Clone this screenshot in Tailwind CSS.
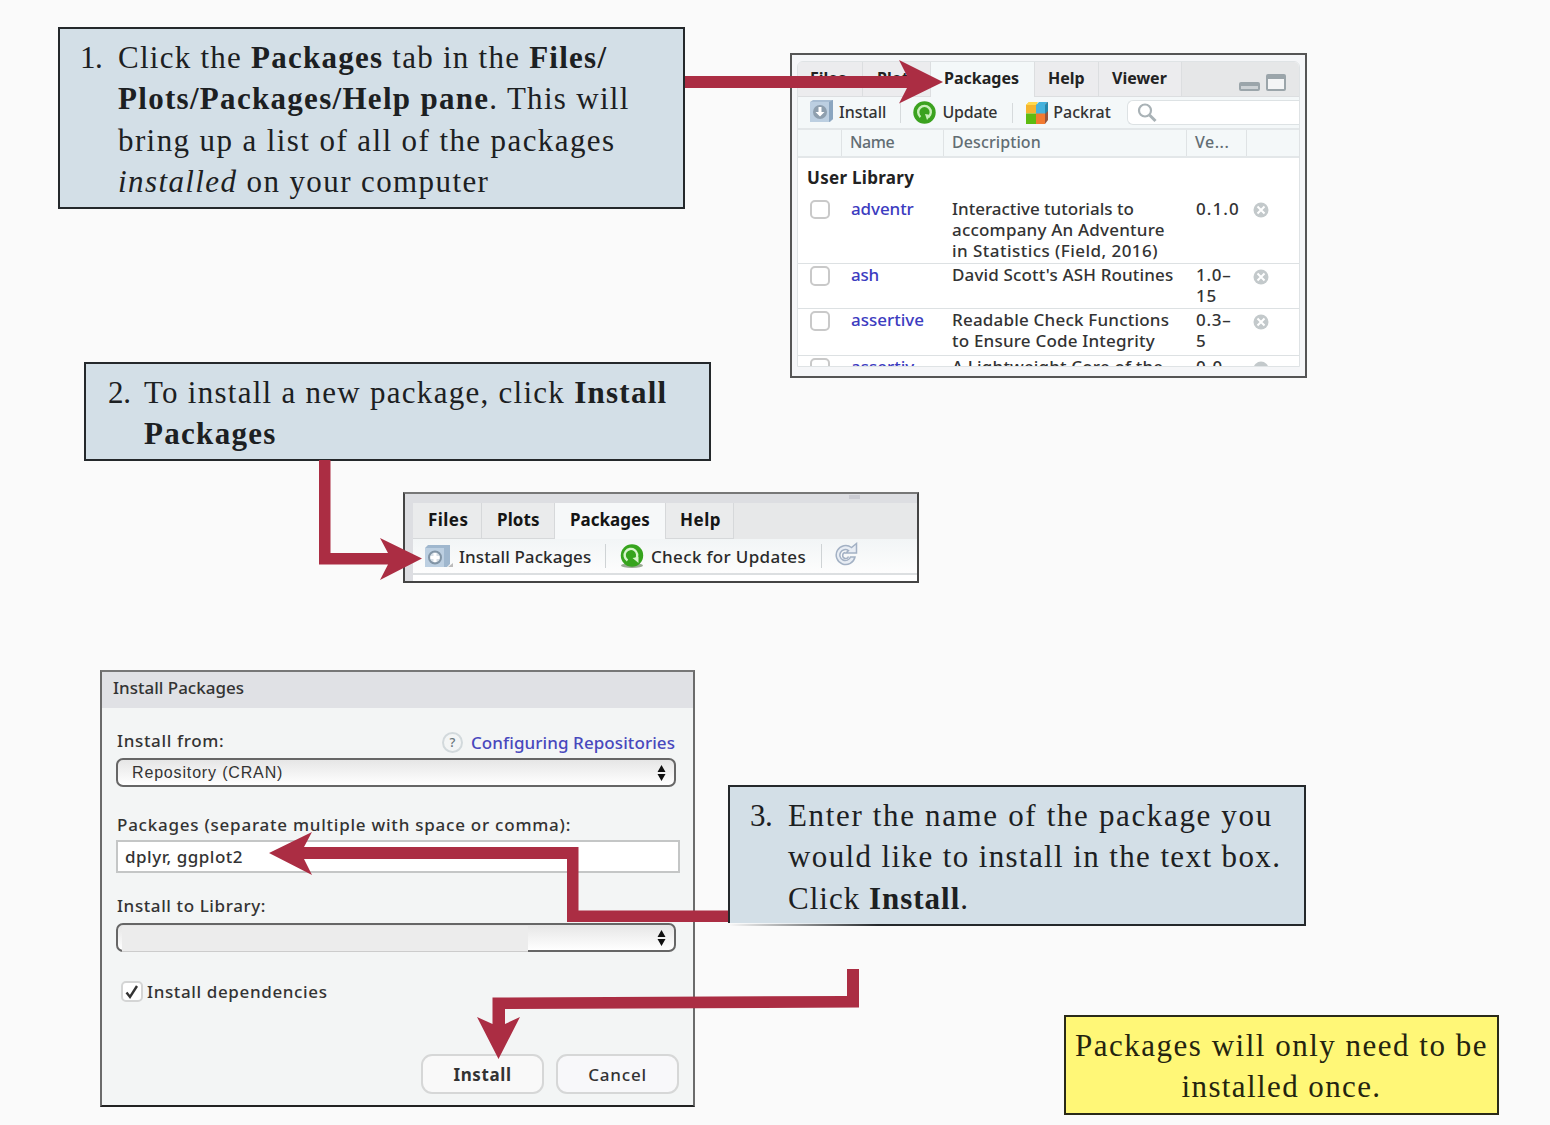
<!DOCTYPE html>
<html lang="en"><head><meta charset="utf-8"><title>Installing packages</title>
<script src="https://cdn.jsdelivr.net/npm/@tailwindcss/browser@4"></script></head>
<body class="bg-[#fafafa]">
<main class="relative w-[1550px] h-[1125px] overflow-hidden font-['Noto_Sans',sans-serif] font-medium text-[16px] leading-[21px] text-[#333] whitespace-nowrap">

<!-- Step 1 -->
<section class="absolute left-[58px] top-[27px] w-[627px] h-[182px] border-2 border-[#24282b] bg-[#d3dfe7] pl-5 pt-[8px] flex font-['Liberation_Serif',serif] font-normal text-[31px] leading-[41.3px] text-[#1c2022]">
<div class="w-[38px] tracking-[-0.5px]">1.</div>
<div><div class="tracking-[1.25px]">Click the <b>Packages</b> tab in the <b>Files/</b></div>
<div class="tracking-[1.3px]"><b>Plots/Packages/Help pane</b>. This will</div>
<div class="tracking-[1.4px]">bring up a list of all of the packages</div>
<div class="tracking-[1.4px]"><i>installed</i> on your computer</div></div>
</section>

<!-- Packages pane -->
<section class="absolute left-[790px] top-[53px] w-[517px] h-[325px] border-2 border-[#555] bg-[#f5f6f8] px-[5px] pt-[6px]">
<div class="h-[306px] overflow-hidden rounded-t-md border border-[#dfe3e5] bg-white">
<div class="h-[35px] flex bg-[#e6e7e8] font-bold text-[#222] leading-[33px]">
<div class="w-[65px] pl-3 border-r border-b border-[#dcdee0] bg-[#ececee]">Files</div>
<div class="w-[68px] pl-[14px] border-r border-b border-[#dcdee0] bg-[#ececee]">Plots</div>
<div class="w-[103px] pl-[13px] bg-[#f4f8f9]">Packages</div>
<div class="w-[65px] pl-[13px] border-x border-b border-[#dcdee0] bg-[#ececee]">Help</div>
<div class="w-[83px] pl-[13px] border-r border-b border-[#dcdee0] bg-[#ececee]">Viewer</div>
<div class="flex-1 flex justify-end items-end gap-[6px] pr-[13px] pb-[5px] border-b border-[#dcdee0]">
<i class="w-[21px] h-[9px] rounded-xs border-2 border-t-4 border-[#9ba5aa] bg-[#cdd2d5]"></i>
<i class="w-[20px] h-[17px] rounded-xs border-2 border-t-[5px] border-[#9ba5aa] bg-[#f4f5f6]"></i></div>
</div>
<div class="h-[31px] flex items-center bg-[#f4f8f9] pl-3">
<svg class="w-[24px] h-[22px] -mt-1" viewBox="0 0 24 22"><path d="M0 2 3 0H23V19L20 22H0Z" fill="#a9bed3"/><path d="M0 2H19V22H0Z" fill="#bccfe1"/><path d="M19 2 23 0V19L19 22Z" fill="#8ba6c0"/><circle cx="10" cy="12" r="7" fill="#8e9fae"/><path d="M8.500 7h3v5h3L10 16.500 5.500 12h3Z" fill="#fff"/></svg>
<span class="ml-[5px]">Install</span>
<i class="w-px h-5 ml-[14px] bg-[#d6dadc]"></i>
<svg class="w-[23px] h-[23px] ml-[12px] -mt-px" viewBox="0 0 23 23"><circle cx="11.500" cy="11.500" r="11.200" fill="#3ba21f"/><path d="M7.500 16A6.300 6.300 0 1 1 15.500 16" fill="none" stroke="#c9efba" stroke-width="2.400"/><path d="m12 13 6 1-4 5z" fill="#c9efba"/></svg>
<span class="ml-[6px] tracking-[-0.2px]">Update</span>
<i class="w-px h-5 ml-[15px] bg-[#d6dadc]"></i>
<svg class="w-[22px] h-[22px] ml-[13px]" viewBox="0 0 22 22"><path d="M0 3 3 0H11V11.500H0Z" fill="#f5b42e"/><path d="M3 0H12L10 3H0Z" fill="#ffd94d"/><path d="M10 3 13 0H22L19 3V12H10Z" fill="#45b2dd"/><path d="M0 11.500H10V22H0Z" fill="#5dbb10"/><path d="M10 11.500H19V22H10Z" fill="#f27a30"/><path d="M19 3 22 0V18L19 22Z" fill="#98543b"/><path d="M19 3 22 0V9L19 12Z" fill="#2586ab"/></svg>
<span class="ml-[5px]">Packrat</span>
<div class="ml-4 flex-1 h-[25px] border border-r-0 border-[#dde2e4] rounded-l-md bg-white pl-[9px] pt-[2px]"><svg class="w-5 h-5" viewBox="0 0 20 20" fill="none" stroke="#a9b2b6"><circle cx="8" cy="7.500" r="6" stroke-width="2.200"/><path d="m12.500 12 6 6" stroke-width="3"/></svg></div>
</div>
<div class="h-[30px] border-y-2 border-[#e3e7e9] bg-[#f4f8f9] flex text-[#626d73] leading-[25px]">
<div class="w-[44px] border-r border-[#dfe3e5]"></div>
<div class="w-[102px] border-r border-[#dfe3e5] pl-[8px] tracking-[-0.4px]">Name</div>
<div class="w-[243px] border-r border-[#dfe3e5] pl-[8px] tracking-[0.1px]">Description</div>
<div class="w-[60px] border-r border-[#dfe3e5] pl-[8px] tracking-[0.5px]">Ve...</div>
</div>
<div class="text-[17px]">
<div class="h-[40px] pt-[9px] pl-[9px] font-bold text-[#222] tracking-[0.3px]">User Library</div>
<div class="h-[66px] flex border-b border-[#dde1e3]">
<div class="w-[53px] pl-3 pt-[2px]"><i class="block w-[20px] h-[19px] border-2 border-[#c9c9c9] rounded-[5px]"></i></div>
<div class="w-[101px] text-[#3c3cc0] tracking-[-0.1px]">adventr</div>
<div class="w-[244px]"><div>Interactive tutorials to</div><div class="tracking-[0.2px]">accompany An Adventure</div><div class="tracking-[0.45px]">in Statistics (Field, 2016)</div></div>
<div class="w-[57px] tracking-[1.1px]">0.1.0</div>
<svg class="w-4 h-4 mt-[4px]" viewBox="0 0 16 16"><circle cx="8" cy="8" r="7.500" fill="#c3c9cb"/><path d="m4.500 4.500 7 7m0-7-7 7" stroke="#fff" stroke-width="2"/></svg>
</div>
<div class="h-[45px] flex border-b border-[#dde1e3]">
<div class="w-[53px] pl-3 pt-[2px]"><i class="block w-[20px] h-[20px] border-2 border-[#c9c9c9] rounded-[5px]"></i></div>
<div class="w-[101px] text-[#3c3cc0] tracking-[-0.3px]">ash</div>
<div class="w-[244px] tracking-[0.15px]">David Scott's ASH Routines</div>
<div class="w-[57px] tracking-[0.7px]"><div>1.0–</div><div>15</div></div>
<svg class="w-4 h-4 mt-[5px]" viewBox="0 0 16 16"><circle cx="8" cy="8" r="7.500" fill="#c3c9cb"/><path d="m4.500 4.500 7 7m0-7-7 7" stroke="#fff" stroke-width="2"/></svg>
</div>
<div class="h-[47px] flex border-b border-[#dde1e3]">
<div class="w-[53px] pl-3 pt-[2px]"><i class="block w-[20px] h-[20px] border-2 border-[#c9c9c9] rounded-[5px]"></i></div>
<div class="w-[101px] text-[#3c3cc0]">assertive</div>
<div class="w-[244px] tracking-[0.2px]"><div>Readable Check Functions</div><div>to Ensure Code Integrity</div></div>
<div class="w-[57px] tracking-[0.7px]"><div>0.3–</div><div>5</div></div>
<svg class="w-4 h-4 mt-[5px]" viewBox="0 0 16 16"><circle cx="8" cy="8" r="7.500" fill="#c3c9cb"/><path d="m4.500 4.500 7 7m0-7-7 7" stroke="#fff" stroke-width="2"/></svg>
</div>
<div class="h-[47px] flex">
<div class="w-[53px] pl-3 pt-[2px]"><i class="block w-[20px] h-[20px] border-2 border-[#c9c9c9] rounded-[5px]"></i></div>
<div class="w-[101px] text-[#3c3cc0]">assertiv</div>
<div class="w-[244px] tracking-[0.16px]">A Lightweight Core of the</div>
<div class="w-[57px] tracking-[1.1px]">0.0</div>
<svg class="w-4 h-4 mt-[5px]" viewBox="0 0 16 16"><circle cx="8" cy="8" r="7.500" fill="#c3c9cb"/></svg>
</div>
</div>
</div>
</section>

<!-- Step 2 -->
<section class="absolute left-[84px] top-[362px] w-[627px] h-[99px] border-2 border-[#24282b] bg-[#d3dfe7] pl-[22px] pt-[8px] flex font-['Liberation_Serif',serif] font-normal text-[31px] leading-[41.3px] text-[#1c2022]">
<div class="w-[36px] tracking-[-0.2px]">2.</div>
<div><div class="tracking-[1.27px]">To install a new package, click <b>Install</b></div>
<div class="tracking-[1.3px]"><b>Packages</b></div></div>
</section>

<!-- Install toolbar -->
<section class="absolute left-[403px] top-[492px] w-[516px] h-[91px] border-2 border-t-[#777] border-[#444] bg-[#dddee2] pl-2 pt-[9px] text-[17px]">
<i class="absolute left-[444px] top-px w-[11px] h-[4px] bg-[#cbccd3]"></i>
<div class="h-[36px] flex bg-[#e7e8e9] font-bold text-[#151515] leading-[33px]">
<div class="w-[69px] pl-[15px] border-r border-b border-[#d6d8da] bg-[#eaebec] tracking-[0.45px]">Files</div>
<div class="w-[73px] pl-[15px] border-r border-b border-[#d6d8da] bg-[#eaebec] tracking-[0.1px]">Plots</div>
<div class="w-[110px] pl-[15px] bg-[#f6f8f9]">Packages</div>
<div class="w-[69px] pl-[14px] border-x border-b border-[#d6d8da] bg-[#eaebec] tracking-[0.5px]">Help</div>
</div>
<div class="h-[36px] flex items-center bg-linear-to-b from-[#f2f5f6] to-[#fdfdfd] border-b-2 border-[#dcdfe1] pl-[12px] text-[#2a2a2a]">
<svg class="w-[28px] h-[22px]" viewBox="0 0 28 22"><path d="M0 3 3 0H25V19L22 22H0Z" fill="#9fb7ce"/><path d="M0 3H19V22H0Z" fill="#bccfe1"/><path d="M23 22 28 18V22Z" fill="#bbb"/><circle cx="10" cy="12.500" r="6" fill="#d7dfe6" stroke="#8194a5" stroke-width="2"/><path d="M8.500 8h3v3h3v3h-3v3h-3v-3h-3v-3h3Z" fill="#fff"/></svg>
<span class="ml-[6px] w-[132px] tracking-[0.08px]">Install Packages</span>
<i class="w-px h-6 ml-[14px] bg-[#cfd3d5]"></i>
<svg class="w-[24px] h-[24px] ml-[14px]" viewBox="0 0 24 24"><ellipse cx="12" cy="21.500" rx="11" ry="2.400" fill="#9aaa94"/><circle cx="12" cy="11.500" r="11.200" fill="#36a41d"/><path d="M7.500 16.500A6.300 6.300 0 1 1 16 15" fill="none" stroke="#d8f5cc" stroke-width="2.400"/><path d="m12.500 14 6-1v6z" fill="#d8f5cc"/></svg>
<span class="ml-[7px] w-[156px] tracking-[0.33px]">Check for Updates</span>
<i class="w-px h-6 ml-[14px] bg-[#cfd3d5]"></i>
<svg class="w-[25px] h-[25px] ml-[11px] -mt-1" viewBox="0 0 25 25" fill="none"><path d="M18.500 5.500A9.500 9.500 0 1 0 22 15h-4.500a5.500 5.500 0 1 1-2-6.500L13 11h10.500V1.500Z" fill="#e8edf4" stroke="#a3b1c4" stroke-width="1.500"/><path d="M12.500 10.500a3 3 0 1 0 3 4" stroke="#a3b1c4" stroke-width="1.500"/></svg>
</div>
<div class="h-[6px] bg-white"></div>
</section>

<!-- Install dialog -->
<section class="absolute left-[100px] top-[670px] w-[595px] h-[437px] border-2 border-t-[#777] border-x-[#6b6b6b] border-b-[#222] bg-[#f3f5f5] text-[17px]">
<div class="h-[36px] bg-[#e0e1e5] leading-[32px] pl-[11px]">Install Packages</div>
<div class="px-[14px]">
<div class="flex items-center h-[50px] pt-[19px] pl-px">
<div class="-mt-1 tracking-[0.65px]">Install from:</div>
<div class="ml-auto mr-[4px] flex items-center text-[#4848bd]"><i class="w-[21px] h-[21px] rounded-full border-2 border-[#d2d9dc] text-[#68747b] text-[13px] leading-[17px] text-center not-italic mr-[8px]">?</i><span class="tracking-[0.08px]">Configuring Repositories</span></div>
</div>
<div class="w-[560px] h-[29px] border-2 border-[#666] rounded-[7px] bg-linear-to-b from-[#e6e6e6] to-white flex items-center pl-[14px] pr-[8px]"><span class="font-['Liberation_Sans',sans-serif] text-[16px] tracking-[0.84px]">Repository (CRAN)</span><svg class="ml-auto w-[9px] h-[16px]" viewBox="0 0 9 16"><path d="M4.500 0 8.500 7H.5ZM4.500 16 8.500 9H.5Z" fill="#111"/></svg></div>
<div class="mt-[27px] pl-px tracking-[0.76px]">Packages (separate multiple with space or comma):</div>
<div class="mt-[5px] w-[564px] h-[33px] border-2 border-[#c4c6c6] bg-white pl-[7px] leading-[29px] tracking-[0.5px]">dplyr, ggplot2</div>
<div class="mt-[22px] pl-px tracking-[0.6px]">Install to Library:</div>
<div class="relative mt-[7px] w-[560px] h-[29px] border-2 border-[#666] rounded-[7px] bg-linear-to-b from-[#e6e6e6] to-white flex items-center pr-[8px]"><i class="absolute left-[4px] top-px w-[406px] h-[26px] bg-[#ececec] border-b border-[#ccc]"></i><svg class="ml-auto w-[9px] h-[16px]" viewBox="0 0 9 16"><path d="M4.500 0 8.500 7H.5ZM4.500 16 8.500 9H.5Z" fill="#111"/></svg></div>
<div class="mt-[29px] pl-[5px] flex items-center"><i class="w-[22px] h-[21px] border-2 border-[#d4d5d5] rounded-[5px] bg-white"><svg viewBox="0 0 18 17" fill="none" stroke="#333" stroke-width="2.400"><path d="m3.500 9.500 3.500 4.500 7-11"/></svg></i><span class="ml-[4px] -mt-px tracking-[0.63px]">Install dependencies</span></div>
<div class="mt-[52px] pl-[305px] flex gap-[12px] text-center leading-[37px]"><div class="w-[123px] h-[40px] rounded-[11px] border-2 border-[#d6d7d7] bg-[#f9f9f9] font-bold tracking-[0.6px]">Install</div><div class="w-[123px] h-[40px] rounded-[11px] border-2 border-[#d6d7d7] bg-[#f8f8fa] tracking-[0.8px]">Cancel</div></div>
</div>
</section>

<!-- Step 3 -->
<section class="absolute left-[728px] top-[785px] w-[578px] h-[141px] border-2 border-[#24282b] bg-[#d3dfe7] pl-5 pt-[8px] flex font-['Liberation_Serif',serif] font-normal text-[31px] leading-[41.3px] text-[#1c2022]">
<div class="w-[38px] tracking-[-0.5px]">3.</div>
<div><div class="tracking-[1.65px]">Enter the name of the package you</div>
<div class="tracking-[1.38px]">would like to install in the text box.</div>
<div class="tracking-[1px]">Click <b>Install</b>.</div></div>
<i class="absolute -left-[2px] -bottom-[2px] w-[150px] h-[3px] bg-linear-to-r from-[#fafafa] to-transparent"></i>
</section>

<!-- Note -->
<section class="absolute left-[1064px] top-[1015px] w-[435px] h-[100px] border-2 border-[#2a2a18] bg-[#fff777] pt-[8px] text-center font-['Liberation_Serif',serif] font-normal text-[31px] leading-[41.3px] text-[#24240f]">
<div class="tracking-[1.5px]">Packages will only need to be</div>
<div class="tracking-[1.4px]">installed once.</div>
</section>

<!-- Arrows -->
<svg class="absolute inset-0 w-[1550px] h-[1125px]" viewBox="0 0 1550 1125" fill="#ab2d43">
<path d="M685 76H907L899 60 943 82 899 103.500 907 88H685Z"/>
<path d="M319 460H330.500V553H388L380 538 422 558.500 380 580 388 564.500H319Z"/>
<path d="M728 922H567V859H304L312 875 269 853 312 832 304 847H578.500V910.500H728Z"/>
<path d="M847 969H859V1007.500L505 1009V1024L520 1017 498.500 1059 477 1017 492.500 1024V997.500L847 996Z"/>
</svg>
</main>
</body></html>
